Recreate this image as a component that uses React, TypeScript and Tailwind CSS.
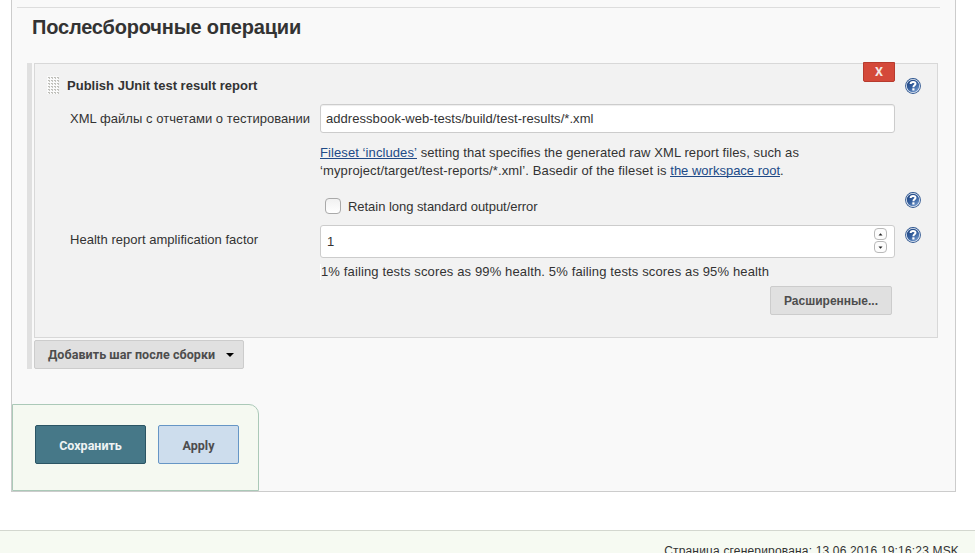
import React from "react";

function HelpIcon() {
  return (
    <svg className="block h-4 w-4" width="16" height="16" viewBox="0 0 16 16">
      <defs>
        <linearGradient id="helpFill" x1="0.2" y1="0" x2="0.9" y2="1">
          <stop offset="0" stopColor="#1f4480" />
          <stop offset="0.5" stopColor="#35609f" />
          <stop offset="1" stopColor="#7fa3d4" />
        </linearGradient>
      </defs>
      <circle cx="8" cy="8" r="7.9" fill="#2d558f" />
      <circle cx="8" cy="8" r="7" fill="#e9eff7" />
      <circle cx="8" cy="8" r="6.2" fill="url(#helpFill)" />
      <path d="M5.6 6.1C5.6 4.500 6.600 3.900 8.100 3.900c1.500 0 2.400.7 2.400 1.900 0 1.600-2.100 1.500-2.100 3.400" fill="none" stroke="#fff" strokeWidth="2" />
      <rect x="7.300" y="10.300" width="2.200" height="2.200" fill="#fff" />
    </svg>
  );
}

function DragHandle() {
  return (
    <svg className="block" width="12" height="18" viewBox="0 0 12 18">
      <defs>
        <pattern id="grip" width="3" height="3" patternUnits="userSpaceOnUse">
          <rect width="3" height="3" fill="#fafafa" />
          <rect x="1" y="1" width="2" height="1" fill="#bcbcb7" />
          <rect x="2" y="1" width="1" height="2" fill="#c4c4bf" />
        </pattern>
      </defs>
      <rect width="12" height="18" fill="url(#grip)" />
    </svg>
  );
}

function SpinButton({ down = false }: { down?: boolean }) {
  return (
    <span className="flex h-3 w-[13px] items-center justify-center rounded-[4px] border border-[#b9b9b9] bg-[#fcfcfc]">
      <svg width="5" height="3" viewBox="0 0 5 3">
        <path d={down ? "M0.500 0.500h4L2.500 2.800z" : "M0.500 2.500h4L2.500 0.200z"} fill="#222" />
      </svg>
    </span>
  );
}

function Row({ label, help, className, children }: { label?: React.ReactNode; help?: boolean; className: string; children?: React.ReactNode }) {
  return (
    <div className={"flex " + className}>
      <div className="w-[250px] shrink-0 whitespace-nowrap">{label}</div>
      <div className="w-[575px] shrink-0">{children}</div>
      <div className="ml-[10px] w-4 shrink-0">{help && <HelpIcon />}</div>
    </div>
  );
}

export default function App() {
  return (
    <div className="flex h-[553px] w-[975px] flex-col overflow-hidden bg-white font-['Liberation_Sans',Arial,sans-serif] text-[13px] leading-[18px] text-[#333]">
      <main className="ml-[11px] flex h-[492px] w-[945px] shrink-0 flex-col border-x border-b border-[#ccc] bg-[#f9f9f9]">
        <div className="mt-[7px] ml-[5px] h-px w-[923px] shrink-0 bg-[#ddd]" />
        <h1 className="mt-[6px] ml-[20px] h-[26px] text-[20px] leading-[26px] font-bold tracking-[-0.18px] whitespace-nowrap">Послесборочные операции</h1>
        <div className="mt-[23px] ml-[15px] flex h-[306px] shrink-0 gap-[2px]">
          <div className="w-[5px] bg-[#e0e0e0]" />
          <div className="flex flex-col gap-[2px]">
            <section className="flex h-[275px] w-[904px] flex-col border border-[#d8d8d8] bg-[#f2f2f2]">
              <header className="flex h-[40px] shrink-0">
                <div className="mt-[12px] ml-[12px] w-[12px]"><DragHandle /></div>
                <strong className="mt-[13px] ml-[8px] w-[796px] tracking-[0.01px]">Publish JUnit test result report</strong>
                <button className="-mt-[2px] h-5 w-8 rounded-b-[2px] border border-[#b73b2e] bg-[#d4493a] font-['Roboto',sans-serif] text-[12.500px] leading-[18px] font-bold text-[#f5e8e6]">X</button>
                <div className="mt-[14px] ml-[10px]"><HelpIcon /></div>
              </header>
              <Row className="ml-[35px] h-[40px]" label={<div className="mt-[6px] tracking-[0.04px]">XML файлы с отчетами о тестировании</div>}>
                <div className="h-[29px] rounded-[3px] border border-[#ccc] bg-white pl-[5px] leading-[27px] tracking-[0.05px] shadow-[inset_0_1px_1px_#eee]">addressbook-web-tests/build/test-results/*.xml</div>
              </Row>
              <Row className="ml-[35px] h-[48px]">
                <p className="tracking-[0.09px] whitespace-nowrap"><span className="inline-block h-[15px] border-b border-[#204a87] leading-[17px] text-[#204a87]">Fileset ‘includes’</span> setting that specifies the generated raw XML report files, such as</p>
                <p className="tracking-[0.12px] whitespace-nowrap">‘myproject/target/test-reports/*.xml’. Basedir of the fileset is <span className="inline-block h-[15px] border-b border-[#204a87] leading-[17px] tracking-normal text-[#204a87]">the workspace root</span>.</p>
              </Row>
              <Row className="ml-[35px] h-[33px]" help>
                <label className="mt-[5px] ml-[5px] flex items-center gap-[7px]">
                  <span className="h-4 w-4 rounded-[4px] border border-[#a9a9a9] bg-linear-to-b from-[#f1f1f1] to-white" />
                  <span className="pt-[2px] leading-[16px] tracking-[-0.04px]">Retain long standard output/error</span>
                </label>
              </Row>
              <div className="ml-[35px] flex h-[61px]">
                <div className="w-[250px] shrink-0 pt-[6px] tracking-[0.03px]">Health report amplification factor</div>
                <div className="w-[575px] shrink-0">
                  <div className="flex h-[33px] justify-between rounded-[3px] border border-[#ccc] bg-white pt-[2px] pr-[7px] pl-[6px]">
                    <span className="leading-[27px]">1</span>
                    <span className="flex flex-col gap-[1px]"><SpinButton /><SpinButton down /></span>
                  </div>
                  <div className="mt-[6px] h-4 border-l border-white leading-[16px] tracking-[0.135px] whitespace-nowrap">1% failing tests scores as 99% health. 5% failing tests scores as 95% health</div>
                </div>
                <div className="mt-[2px] ml-[10px]"><HelpIcon /></div>
              </div>
              <button className="mr-[45px] h-[29px] w-[122px] shrink-0 self-end rounded-[2px] border border-[#ccc] bg-[#e0e0e0] pt-px text-[12px] leading-[27px] font-bold text-[#4d4d4d]">Расширенные...</button>
            </section>
            <button className="flex h-[29px] w-[210px] items-center justify-between rounded-[2px] border border-[#ccc] bg-[#e0e0e0] pr-[9px] pl-[13px] font-['Roboto',sans-serif] text-[12.500px] font-bold tracking-[0.06px] whitespace-nowrap text-[#4d4d4d]">
              Добавить шаг после сборки
              <svg width="8" height="4" viewBox="0 0 8 4"><path d="M0 0h8L4 4z" fill="#000" /></svg>
            </button>
          </div>
        </div>
        <div className="mt-auto flex h-[87px] w-[247px] shrink-0 gap-3 rounded-tr-[10px] border border-[#abc9b8] bg-[#f5f9f1] pt-[20px] pl-[22px] font-['Roboto',sans-serif] text-[12.500px] font-bold">
          <button className="h-[39px] w-[111px] rounded-[2px] border border-[#2b5564] bg-[#467888] pt-[2px] text-[#eef3f4]">Сохранить</button>
          <button className="h-[39px] w-[81px] rounded-[2px] border border-[#6696c6] bg-[#cddded] pt-[2px] text-[#4d4d4d]">Apply</button>
        </div>
      </main>
      <footer className="mt-[38px] h-[60px] shrink-0 border-t border-[#d3d7cf] bg-[#f6faf2] pt-[11px] pr-[16px] text-right text-[12px] tracking-[0.17px]">Страница сгенерирована: 13.06.2016 19:16:23 MSK</footer>
    </div>
  );
}
